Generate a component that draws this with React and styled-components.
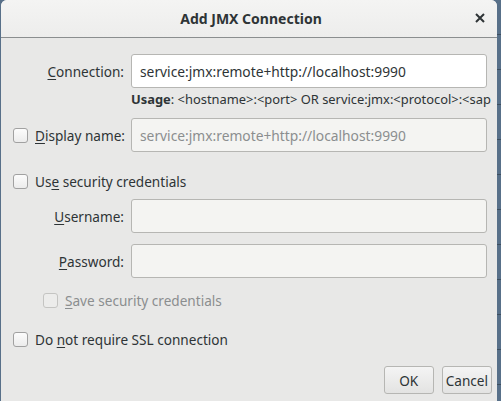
import React from 'react';
import styled, { createGlobalStyle } from 'styled-components';

const Global = createGlobalStyle`
  html, body {
    margin: 0;
    padding: 0;
    background: #587089;
    overflow: hidden;
  }
  body {
    font-family: "Noto Sans", "DejaVu Sans", sans-serif;
    font-size: 13.6px;
    color: #2e3436;
  }
`;

const Screen = styled.div`
  display: flex;
  width: 501px;
  height: 401px;
`;

const Dialog = styled.div`
  margin-left: 1px;
  width: 496px;
  height: 401px;
  display: flex;
  flex-direction: column;
  background: #e8e8e7;
  border-radius: 6px 6px 0 0;
  overflow: hidden;
`;

const Backdrop = styled.div`
  flex: 1;
  background: repeating-linear-gradient(
    to bottom,
    #587089 0px,
    #587089 34px,
    #3d4f60 34px,
    #3d4f60 35px
  );
`;

const TitleBar = styled.div`
  height: 37px;
  flex: none;
  display: flex;
  align-items: center;
  justify-content: center;
  position: relative;
  background: linear-gradient(to bottom, #f4f4f3, #ededec);
  border-bottom: 1px solid #8b8e8f;
`;

const Title = styled.div`
  font-weight: bold;
  font-size: 14px;
  color: #2e3436;
  margin-left: 4px;
`;

const CloseButton = styled.div`
  position: absolute;
  right: 11px;
  top: 12px;
  width: 12px;
  height: 12px;
  display: flex;
  align-items: center;
  justify-content: center;
`;

const Body = styled.div`
  flex: 1;
  display: flex;
  flex-direction: column;
  padding: 16px 10px 7px 12px;
`;

const FieldRow = styled.div`
  display: grid;
  grid-template-columns: 111px 1fr;
  column-gap: 7px;
  align-items: center;
  margin-top: ${p => p.$gap || 0}px;
`;

const Label = styled.label`
  display: flex;
  align-items: center;
  justify-content: ${p => (p.$check ? 'flex-start' : 'flex-end')};
  gap: 7px;
  white-space: nowrap;
  color: #2e3436;
`;

const Input = styled.div`
  height: 34px;
  box-sizing: border-box;
  padding: 0 8px;
  display: flex;
  align-items: center;
  border: 1px solid #b6b6b3;
  border-radius: 3px;
  background: ${p => (p.$disabled ? '#f4f4f2' : '#ffffff')};
  color: ${p => (p.$disabled ? '#8b8e8f' : '#2e3436')};
  font-size: 13.8px;
  white-space: nowrap;
  overflow: hidden;
`;

const Usage = styled.div`
  margin: 2px -8px 0 118px;
  height: 18px;
  line-height: 18px;
  font-size: 12.9px;
  white-space: nowrap;
  overflow: hidden;
  color: #2e3436;
  b {
    font-weight: bold;
  }
`;

const Box = styled.span`
  flex: none;
  box-sizing: border-box;
  width: 15px;
  height: 15px;
  border: 1px solid ${p => (p.$disabled ? '#c4c4c2' : '#a1a1a1')};
  border-radius: 3px;
  background: ${p =>
    p.$disabled ? '#ececeb' : 'linear-gradient(to bottom, #fcfcfc, #ececec)'};
`;

const CheckRow = styled.label`
  display: flex;
  align-items: center;
  gap: 7px;
  height: 18px;
  margin-top: ${p => p.$gap || 0}px;
  margin-left: ${p => p.$indent || 0}px;
  color: ${p => (p.$disabled ? '#8b8e8f' : '#2e3436')};
`;

const Mnemonic = styled.u`
  text-underline-offset: 2px;
`;

const Spacer = styled.div`
  flex: 1;
`;

const Buttons = styled.div`
  display: flex;
  justify-content: flex-end;
  gap: 8px;
  margin-right: -5px;
`;

const Button = styled.button`
  height: 28px;
  min-width: 50px;
  padding: 0 3px;
  border: 1px solid #b6b6b3;
  border-radius: 3px;
  background: linear-gradient(to bottom, #f4f4f4, #e3e3e2);
  font-family: inherit;
  font-size: 13.6px;
  color: #2e3436;
`;

export default function App() {
  return (
    <Screen>
      <Global />
      <Dialog>
        <TitleBar>
          <Title>Add JMX Connection</Title>
          <CloseButton>
            <svg width="10" height="10" viewBox="0 0 10 10">
              <path d="M1 1L9 9M9 1L1 9" stroke="#2e3436" strokeWidth="2" />
            </svg>
          </CloseButton>
        </TitleBar>
        <Body>
          <FieldRow>
            <Label>
              <span><Mnemonic>C</Mnemonic>onnection:</span>
            </Label>
            <Input>service:jmx:remote+http://localhost:9990</Input>
          </FieldRow>
          <Usage>
            <b>Usage</b>: &lt;hostname&gt;:&lt;port&gt; OR service:jmx:&lt;protocol&gt;:&lt;sap
          </Usage>
          <FieldRow $gap={10}>
            <Label $check>
              <Box />
              <span><Mnemonic>D</Mnemonic>isplay name:</span>
            </Label>
            <Input $disabled>service:jmx:remote+http://localhost:9990</Input>
          </FieldRow>
          <CheckRow $gap={20}>
            <Box />
            <span>Us<Mnemonic>e</Mnemonic> security credentials</span>
          </CheckRow>
          <FieldRow $gap={9}>
            <Label>
              <span><Mnemonic>U</Mnemonic>sername:</span>
            </Label>
            <Input $disabled />
          </FieldRow>
          <FieldRow $gap={11}>
            <Label>
              <span><Mnemonic>P</Mnemonic>assword:</span>
            </Label>
            <Input $disabled />
          </FieldRow>
          <CheckRow $gap={13} $indent={30} $disabled>
            <Box $disabled />
            <span><Mnemonic>S</Mnemonic>ave security credentials</span>
          </CheckRow>
          <CheckRow $gap={21}>
            <Box />
            <span>Do <Mnemonic>n</Mnemonic>ot require SSL connection</span>
          </CheckRow>
          <Spacer />
          <Buttons>
            <Button>OK</Button>
            <Button>Cancel</Button>
          </Buttons>
        </Body>
      </Dialog>
      <Backdrop />
    </Screen>
  );
}
